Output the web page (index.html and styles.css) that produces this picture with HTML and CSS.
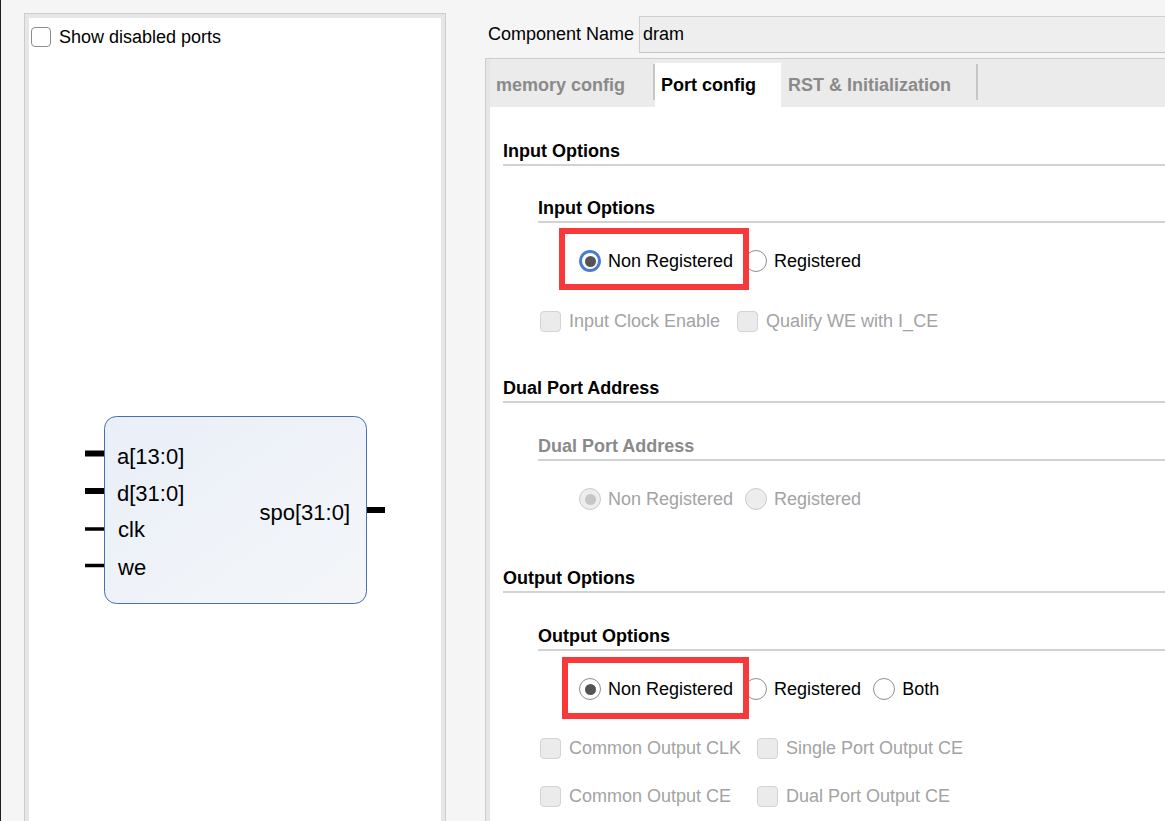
FILE: index.html
```html
<!DOCTYPE html>
<html>
<head>
<meta charset="utf-8">
<title>dram - Port config</title>
<link rel="stylesheet" href="styles.css">
</head>
<body>
<div class="app">
  <div class="left-panel">
    <div class="left-inner">
      <label class="show-row"><span class="cb"></span><span>Show disabled ports</span></label>
      <svg class="diagram" width="412" height="220" viewBox="0 0 412 220">
        <defs>
          <linearGradient id="blk" x1="0" y1="0" x2="1" y2="1">
            <stop offset="0" stop-color="#e9eff8"/>
            <stop offset="1" stop-color="#f4f6f9"/>
          </linearGradient>
        </defs>
        <rect x="75.5" y="16.5" width="262" height="187" rx="12" fill="url(#blk)" stroke="#4a6fb0" stroke-width="1"/>
        <line x1="56" y1="53.5" x2="75" y2="53.5" stroke="#000" stroke-width="6"/>
        <line x1="56" y1="91" x2="75" y2="91" stroke="#000" stroke-width="6"/>
        <line x1="56" y1="129" x2="75" y2="129" stroke="#000" stroke-width="3.5"/>
        <line x1="56" y1="165.5" x2="75" y2="165.5" stroke="#000" stroke-width="3.5"/>
        <line x1="338" y1="110" x2="356" y2="110" stroke="#000" stroke-width="6"/>
        <g class="ports">
          <text x="88" y="64">a[13:0]</text>
          <text x="88" y="101">d[31:0]</text>
          <text x="89" y="137">clk</text>
          <text x="89" y="175">we</text>
          <text x="321" y="120" text-anchor="end">spo[31:0]</text>
        </g>
      </svg>
    </div>
  </div>

  <div class="right">
    <div class="name-row">
      <span class="name-label">Component Name</span>
      <div class="name-field">dram</div>
    </div>

    <div class="tabpanel">
      <div class="tabs">
        <div class="tab first-tab">memory config</div>
        <div class="tab active">Port config</div>
        <div class="tab">RST &amp; Initialization</div>
      </div>

      <div class="content">
        <div class="h1 first">Input Options</div>
        <div class="group">
          <div class="h1 g-head g-first">Input Options</div>
          <div class="radios r-row">
            <span class="mark mark-in"></span>
            <span class="ritem"><span class="radio focus"><span class="dot"></span></span>Non Registered</span>
            <span class="ritem"><span class="radio"></span>Registered</span>
          </div>
          <div class="checks c-row1">
            <span class="citem"><span class="dcb"></span>Input Clock Enable</span>
            <span class="citem"><span class="dcb"></span>Qualify WE with I_CE</span>
          </div>
        </div>

        <div class="h1 sec2">Dual Port Address</div>
        <div class="group">
          <div class="h1 g-head disabled-head">Dual Port Address</div>
          <div class="radios r-row disabled">
            <span class="ritem"><span class="radio off"><span class="dot"></span></span>Non Registered</span>
            <span class="ritem"><span class="radio off"></span>Registered</span>
          </div>
        </div>

        <div class="h1 sec3">Output Options</div>
        <div class="group">
          <div class="h1 g-head">Output Options</div>
          <div class="radios r-row">
            <span class="mark mark-out"></span>
            <span class="ritem"><span class="radio"><span class="dot"></span></span>Non Registered</span>
            <span class="ritem"><span class="radio"></span>Registered</span>
            <span class="ritem"><span class="radio"></span>Both</span>
          </div>
          <div class="checks c-row2">
            <span class="citem w-col"><span class="dcb"></span>Common Output CLK</span>
            <span class="citem"><span class="dcb"></span>Single Port Output CE</span>
          </div>
          <div class="checks c-row3">
            <span class="citem w-col"><span class="dcb"></span>Common Output CE</span>
            <span class="citem"><span class="dcb"></span>Dual Port Output CE</span>
          </div>
        </div>
      </div>
    </div>
  </div>
</div>
</body>
</html>
```

FILE: styles.css
```css
* { box-sizing: border-box; }

html, body {
  margin: 0;
  padding: 0;
}

body {
  width: 1165px;
  height: 821px;
  overflow: hidden;
  background: #f5f5f5;
  font-family: "Liberation Sans", Arial, sans-serif;
  font-size: 18px;
  color: #000;
}

.app {
  display: flex;
  align-items: flex-start;
  height: 821px;
  overflow: hidden;
  border-left: 1px solid #1e1e1e;
}

/* ---------- left panel ---------- */
.left-panel {
  flex: none;
  width: 422px;
  height: 900px;
  margin: 13px 0 0 23px;
  border: 1px solid #cdcdcd;
  border-bottom: none;
  background: #e6e6e6;
  padding: 4px 4px 0 4px;
}

.left-inner {
  background: #fff;
  height: 100%;
}

.show-row {
  display: flex;
  align-items: center;
  gap: 8px;
  padding: 9px 0 0 2px;
  height: 29px;
  line-height: 20px;
}

.cb {
  width: 20px;
  height: 20px;
  border: 1.5px solid #8c8c8c;
  border-radius: 4px;
  background: #fff;
  flex: none;
}

.diagram {
  display: block;
  margin-top: 353px;
}

.ports text {
  font-family: "Liberation Sans", Arial, sans-serif;
  font-size: 22px;
  fill: #000;
}

/* ---------- right side ---------- */
.right {
  flex: none;
  width: 720px;
  margin-left: 39px;
}

.name-row {
  display: flex;
  align-items: center;
  margin-top: 16px;
  height: 37px;
}

.name-label {
  padding-left: 3px;
  margin-right: 5px;
  white-space: nowrap;
}

.name-field {
  flex: 1;
  height: 37px;
  line-height: 35px;
  padding-left: 3px;
  background: #eeeeee;
  border: 1px solid #cfcfcf;
  border-bottom-color: #c4c4c4;
}

.tabpanel {
  margin-top: 5px;
  height: 800px;
  border-top: 1px solid #cdcdcd;
  border-left: 1px solid #cdcdcd;
  background: #e6e6e6;
  padding-left: 4px;
}

.tabs {
  display: flex;
  align-items: flex-end;
  height: 48px;
  background: #ebebeb;
}

.tab {
  position: relative;
  height: 44px;
  display: flex;
  align-items: center;
  padding: 0 27px 0 7px;
  font-weight: bold;
  color: #8a8a8a;
  white-space: nowrap;
}

.tab.first-tab {
  padding-left: 6px;
  padding-right: 30px;
}

.tab::after {
  content: "";
  position: absolute;
  right: 0;
  top: 1px;
  height: 36px;
  width: 2px;
  background: #c6c6c6;
}

.tab.active {
  background: #fff;
  color: #000;
  padding-left: 6px;
  padding-right: 25px;
}

.tab.active::after { display: none; }

.content {
  background: #fff;
  height: 100%;
  padding: 34px 0 0 13px;
}

.h1 {
  font-weight: bold;
  line-height: 20px;
  padding-bottom: 3px;
  border-bottom: 2px solid #d2d2d2;
  white-space: nowrap;
}

.sec2 { margin-top: 45px; }
.sec3 { margin-top: 57px; }

.group {
  margin-left: 35px;
}

.g-head { margin-top: 33px; }
.g-head.g-first { margin-top: 32px; }

.disabled-head { color: #8a8a8a; }

.radios {
  position: relative;
  display: flex;
  align-items: center;
  gap: 12px;
  height: 24px;
  padding-left: 41px;
  margin-top: 26px;
}

.ritem {
  display: inline-flex;
  align-items: center;
  gap: 7px;
  white-space: nowrap;
}

.radio {
  width: 22px;
  height: 22px;
  border-radius: 50%;
  border: 1.5px solid #8e8e8e;
  background: #fff;
  display: flex;
  align-items: center;
  justify-content: center;
  flex: none;
}

.radio .dot {
  width: 11px;
  height: 11px;
  border-radius: 50%;
  background: #545454;
}

.radio.focus {
  border: 3px solid #4a7bd3;
}

.radio.off {
  border-color: #cbcbcb;
  background: #ededed;
}

.radio.off .dot { background: #c6c6c6; }

.disabled { color: #a3a3a3; }

.mark {
  position: absolute;
  border: 6px solid #f8393b;
  pointer-events: none;
}

.mark-in {
  left: 21px;
  top: -21px;
  width: 190px;
  height: 62px;
}

.mark-out {
  left: 24px;
  top: -20px;
  width: 187px;
  height: 62px;
}

.checks {
  display: flex;
  align-items: center;
  gap: 17px;
  height: 24px;
  padding-left: 2px;
  color: #a3a3a3;
}

.c-row1 { margin-top: 36px; }
.c-row2 { margin-top: 35px; }
.c-row3 { margin-top: 24px; }

.citem {
  display: inline-flex;
  align-items: center;
  gap: 8px;
  white-space: nowrap;
}

.w-col { width: 200px; }

.dcb {
  width: 21px;
  height: 21px;
  border: 1.5px solid #d3d3d3;
  border-radius: 4px;
  background: #ebebeb;
  flex: none;
}
```
